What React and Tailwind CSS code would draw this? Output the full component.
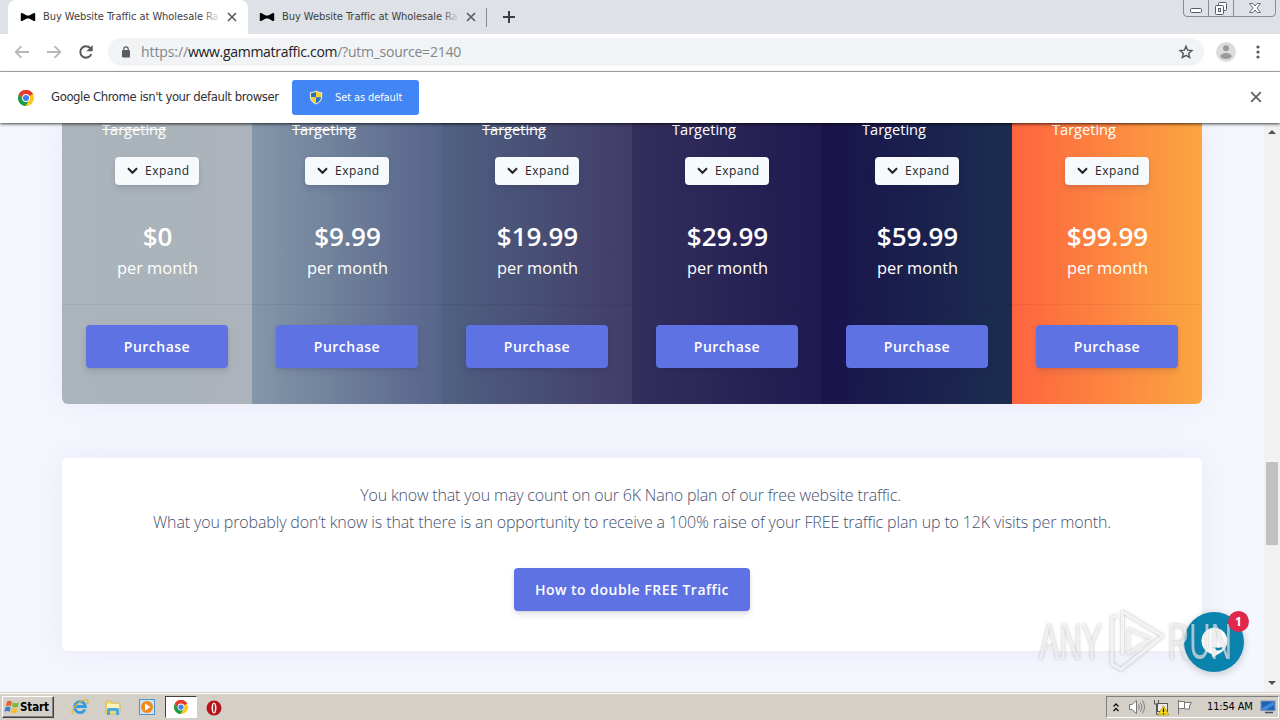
import React from "react";

const plans = [
  { price: "$0", off: true, bg: "bg-[linear-gradient(90deg,#aab4ba,#acb3bb)]" },
  { price: "$9.99", off: true, bg: "bg-[linear-gradient(90deg,#8497a9,#56648a)]" },
  { price: "$19.99", off: true, bg: "bg-[linear-gradient(90deg,#4f6181,#413c68)]" },
  { price: "$29.99", off: false, bg: "bg-[linear-gradient(90deg,#332f5b,#1f1a50)]" },
  { price: "$59.99", off: false, bg: "bg-[linear-gradient(90deg,#1a134c,#1b2d4f)]" },
  { price: "$99.99", off: false, bg: "bg-[linear-gradient(90deg,#fe643f,#fba640)]" },
];

const Bow = () => (
  <svg width="16" height="10" viewBox="0 0 16 10" className="shrink-0">
    <path d="M0.800 1.800Q0.800.6 2.200 1.100L6.800 3.600h2.400L13.800 1.100q1.400-.5 1.400.7v6.400q0 1.200-1.400.7L9.200 6.400H6.800L2.200 8.900Q.8 9.400.8 8.200Z" fill="#050505" />
  </svg>
);

const Cross = ({ size = 10, color = "#5a5e63", w = 1.700 }) => (
  <svg width={size} height={size} viewBox="0 0 10 10" className="shrink-0">
    <path d="M1 1l8 8M9 1L1 9" stroke={color} strokeWidth={w} fill="none" />
  </svg>
);

const Chrome = ({ size }) => (
  <svg width={size} height={size} viewBox="0 0 16 16" className="shrink-0">
    <circle cx="8" cy="8" r="8" fill="#fbc916" />
    <path d="M8 8L1.070 4A8 8 0 0 1 14.930 4Z" fill="#e33b2e" />
    <path d="M8 4.300H14.950A8 8 0 0 0 1.070 4L4.700 9.800Z" fill="#e33b2e" />
    <path d="M1.070 4A8 8 0 0 0 7.500 16L11 10.200 8 8 4.800 9.900Z" fill="#1a9c52" />
    <circle cx="8" cy="8" r="3.900" fill="#fff" />
    <circle cx="8" cy="8" r="3" fill="#4380ee" />
  </svg>
);

function Tab({ active }) {
  return (
    <div className={active ? "flex h-[34px] w-[240px] items-center rounded-t-lg bg-white pl-[12px]" : "flex h-[34px] w-[239px] items-center pl-[11px]"}>
      <Bow />
      <div className="relative ml-[7px] w-[178px] overflow-hidden whitespace-nowrap font-['DejaVu_Sans_Condensed','DejaVu_Sans',sans-serif] text-[11px] tracking-[-0.05px] text-[#3c4043]">
        Buy Website Traffic at Wholesale Ra
        <div className={active ? "absolute inset-y-0 right-0 w-5 bg-gradient-to-r from-white/0 to-white" : "absolute inset-y-0 right-0 w-5 bg-gradient-to-r from-[#dee1e6]/0 to-[#dee1e6]"} />
      </div>
      <div className="ml-[6px] flex"><Cross /></div>
    </div>
  );
}

function TabStrip() {
  return (
    <div className="flex h-[34px] shrink-0 bg-[#dee1e6] pl-2">
      <Tab active />
      <Tab />
      <div className="-ml-px mt-[8px] h-[19px] w-px bg-[#868b91]" />
      <svg width="14" height="14" viewBox="0 0 14 14" className="mt-[10px] ml-[15px]"><path d="M7 1v12M1 7h12" stroke="#3b3f44" strokeWidth="2" /></svg>
      <svg width="94" height="18" viewBox="0 0 94 18" className="ml-auto mr-[3px]" fill="none" stroke="#898d93">
        <path d="M.5 0v13q0 3.500 3.500 3.500h85q3.500 0 3.500-3.500V0M25.500 0v16M50.500 0v16" />
        <rect x="7.500" y="8.500" width="11" height="4" rx="1" fill="#fff" stroke="#555b66" />
        <rect x="35.500" y="2.500" width="8" height="8" rx="1" fill="#fff" stroke="#555b66" />
        <rect x="32.500" y="5.500" width="8" height="9" rx="1" fill="#fff" stroke="#555b66" />
        <rect x="35.500" y="8.500" width="2" height="3" stroke="#555b66" />
        <path d="M66.500 3.500h3.500l2 2.500 2-2.500h3.500l-3.500 4.500 3.500 4.500h-3.500l-2-2.500-2 2.500h-3.500l3.500-4.500Z" fill="#fff" stroke="#6b7079" />
      </svg>
    </div>
  );
}

function Toolbar() {
  return (
    <div className="flex h-[38px] shrink-0 items-center border-b border-[#b0b2b4] bg-white pb-px pl-[14px]">
      <svg width="16" height="14" viewBox="0 0 16 14" fill="none" stroke="#b5b7ba" strokeWidth="1.800"><path d="M15 7H2M7.500 1.200L1.700 7l5.800 5.800" /></svg>
      <svg width="16" height="14" viewBox="0 0 16 14" fill="none" stroke="#b5b7ba" strokeWidth="1.800" className="ml-4"><path d="M1 7h13M8.500 1.200L14.300 7l-5.800 5.800" /></svg>
      <svg width="16" height="16" viewBox="0 0 16 16" className="ml-[16px]"><path d="M13.300 10A5.700 5.700 0 1 1 12.300 4.200" fill="none" stroke="#54585d" strokeWidth="2" /><path d="M14.700 1v6.300H8.400Z" fill="#54585d" /></svg>
      <div className="ml-[14px] flex h-[28px] w-[1096px] items-center rounded-full bg-[#f1f3f4] pl-[13px]">
        <svg width="10" height="12" viewBox="0 0 10 12"><rect x="1" y="4" width="8" height="7.500" rx="1" fill="#5a5e63" /><path d="M2.800 5V3a2.200 2.200 0 0 1 4.400 0v2" fill="none" stroke="#5a5e63" strokeWidth="1.200" /></svg>
        <div className="ml-[10px] whitespace-nowrap font-['Open_Sans','Noto_Sans',sans-serif] text-[14px] leading-[20px] tracking-[-0.24px] text-[#80868b]"><span className="tracking-[-0.1px]">https://</span><span className="tracking-[-0.3px] text-[#202124]">www.gammatraffic.com</span>/?utm_source=2140</div>
        <svg width="16" height="16" viewBox="0 0 16 16" className="ml-auto mr-[10px]"><path d="M8 2.200l1.600 4 4.300.4-3.300 2.800 1.100 4.200L8 11.300l-3.700 2.300 1.100-4.200-3.300-2.800 4.300-.4Z" fill="none" stroke="#54585d" strokeWidth="1.400" /></svg>
      </div>
      <svg width="20" height="20" viewBox="0 0 20 20" className="ml-[12px]"><circle cx="10" cy="10" r="10" fill="#dcdcdc" /><circle cx="10" cy="6.300" r="3" fill="#9a9a9a" /><ellipse cx="10" cy="14" rx="5.600" ry="3" fill="#9a9a9a" /></svg>
      <svg width="4" height="14" viewBox="0 0 4 14" className="ml-[20px]" fill="#54585d"><circle cx="2" cy="2" r="1.600" /><circle cx="2" cy="7" r="1.600" /><circle cx="2" cy="12" r="1.600" /></svg>
    </div>
  );
}

function InfoBar() {
  return (
    <div className="z-10 flex h-[51px] shrink-0 items-center bg-white pl-[18px] font-['DejaVu_Sans_Condensed','DejaVu_Sans',sans-serif] shadow-[0_1px_3px_rgba(0,0,0,0.75)]">
      <Chrome size={16} />
      <div className="ml-[17px] w-[241px] whitespace-nowrap pb-[2px] text-[13px] tracking-[-0.42px] text-[#303236]">Google Chrome isn't your default browser</div>
      <div className="flex h-[35px] w-[127px] items-center rounded-[3px] bg-[#4285f4] pl-[17px]">
        <svg width="14" height="15" viewBox="0 0 14 15"><path d="M7 .5Q9.500 2.200 13.200 2.200V7q0 5-6.200 7.500Q.8 12 .8 7V2.200Q4.500 2.200 7 .5Z" fill="#e9e3bb" /><path d="M7 1.800V7.300H2V3.300Q5 3.200 7 1.800Z" fill="#2a6fc3" /><path d="M7 1.800Q9 3.200 12 3.300v4H7Z" fill="#f5cf2f" /><path d="M2 7.300h5v6Q2.300 11.300 2 7.300Z" fill="#f5cf2f" /><path d="M7 7.300h5Q11.700 11.300 7 13.300Z" fill="#2a6fc3" /></svg>
        <span className="ml-[12px] whitespace-nowrap pt-px text-[11px] tracking-[-0.1px] text-white">Set as default</span>
      </div>
      <div className="ml-auto mr-[18px] flex pb-px"><Cross size={12} color="#5f6368" w={1.500} /></div>
    </div>
  );
}

function Plan({ plan }) {
  return (
    <div className={`flex w-[190px] flex-col text-white ${plan.bg}`}>
      <div className={plan.off ? "-mt-[4px] h-[20px] pl-[40px] text-[14.6px] leading-[20px] line-through" : "-mt-[4px] h-[20px] pl-[40px] text-[14.6px] leading-[20px]"}>Targeting</div>
      <div className="mx-auto mt-[18px] flex h-[28px] w-[84px] items-center rounded bg-[#f7fafc] pl-[12px] text-[12px] font-medium tracking-[0.5px] text-[#212529] shadow-[0_4px_6px_rgba(50,50,93,0.11),0_1px_3px_rgba(0,0,0,0.08)]">
        <svg width="11" height="8" viewBox="0 0 11 8"><path d="M1 1.200l4.500 4.600L10 1.200" fill="none" stroke="#212529" strokeWidth="2" /></svg>
        <span className="ml-[7px]">Expand</span>
      </div>
      <div className="mt-[32px] h-[39px] pl-px text-center text-[26px] font-semibold leading-[39px]">{plan.price}</div>
      <div className="h-[24px] pl-px text-center text-[16.4px] leading-[24px]">per month</div>
      <div className="mt-[24px] flex h-[100px] justify-center border-t border-black/5 pt-[20px]">
        <div className="flex h-[43px] w-[142px] items-center justify-center rounded bg-[#5e72e4] text-[14px] font-semibold tracking-[0.5px] shadow-[0_4px_6px_rgba(50,50,93,0.11),0_1px_3px_rgba(0,0,0,0.08)]">Purchase</div>
      </div>
    </div>
  );
}

function Watermark() {
  return (
    <svg width="200" height="76" viewBox="1035 602 200 76" className="absolute top-[479px] left-[1035px]">
      <g fill="rgba(255,255,255,0.6)" style={{ filter: "drop-shadow(0 0 1.800px rgba(70,70,80,.55))" }}>
        <text x="1039" y="659" textLength="63" lengthAdjust="spacingAndGlyphs" fontFamily="Liberation Sans, sans-serif" fontSize="50">ANY</text>
        <text x="1168" y="659" textLength="64" lengthAdjust="spacingAndGlyphs" fontFamily="Liberation Sans, sans-serif" fontSize="50">RUN</text>
      </g>
      <g fill="none" strokeLinejoin="round" style={{ filter: "drop-shadow(0 0 1.800px rgba(70,70,80,.5))" }}>
        <path d="M1122.500 654V611.500L1162.500 636L1121 669.500L1112 664V618L1117 615.500" stroke="#fff" strokeOpacity="0.750" strokeWidth="3" />
        <path d="M1128.500 629L1151 639L1128.500 653.500Z" stroke="#fff" strokeOpacity="0.600" strokeWidth="2.500" />
      </g>
    </svg>
  );
}

function Page() {
  return (
    <div className="relative flex h-[569px] shrink-0 bg-[#f5f7ff] font-['Open_Sans','Noto_Sans',sans-serif]">
      <div className="flex w-[1264px] flex-col pl-[62px]">
        <div className="flex h-[281px] w-[1140px] overflow-hidden rounded-b-md shadow-[0_0_32px_rgba(136,120,150,0.12)]">
          {plans.map((p) => <Plan key={p.price} plan={p} />)}
        </div>
        <div className="mt-[54px] flex h-[193px] w-[1140px] flex-col items-center rounded-md bg-white pt-[24px] text-center text-[16px] font-light leading-[27px] text-[#46506e] shadow-[0_0_32px_rgba(136,120,150,0.12)]">
          <p className="mr-[3px] whitespace-nowrap tracking-[-0.17px]">You know that you may count on our 6K Nano plan of our free website traffic.</p>
          <p className="whitespace-nowrap tracking-[-0.135px]">What you probably don’t know is that there is an opportunity to receive a 100% raise of your FREE traffic plan up to 12K visits per month.</p>
          <div className="mt-[32px] flex h-[43px] w-[236px] items-center justify-center rounded bg-[#5e72e4] text-[14px] font-semibold tracking-[0.5px] text-white shadow-[0_4px_6px_rgba(50,50,93,0.11),0_1px_3px_rgba(0,0,0,0.08)]">How to double FREE Traffic</div>
        </div>
      </div>
      <div className="flex w-[16px] flex-col items-center bg-[#f1f1f1]">
        <svg width="8" height="4" viewBox="0 0 8 4" className="mt-[7px]"><path d="M0 4l4-4 4 4Z" fill="#505050" /></svg>
        <div className="mt-[328px] h-[83px] w-[12px] bg-[#c1c1c1]" />
        <svg width="8" height="4" viewBox="0 0 8 4" className="mt-auto mb-[7px]"><path d="M0 0h8L4 4Z" fill="#505050" /></svg>
      </div>
      <div className="absolute top-[489px] left-[1184px] flex h-[60px] w-[60px] items-center justify-center rounded-full bg-[#0a84ae] shadow-[0_2px_8px_rgba(0,0,0,0.2)]">
        <svg width="30" height="32" viewBox="0 0 30 32"><path d="M15 1.500a13.500 13.500 0 0 1 7.500 24.700L13.500 31.500l-1-3.500A13.500 13.500 0 0 1 15 1.500Z" fill="#fff" /><path d="M13.500 21q6 1.500 11 0-2.500 4-6.500 3.500Z" fill="#0a84ae" /></svg>
      </div>
      <Watermark />
      <div className="absolute top-[488px] left-[1228px] flex h-[21px] w-[21px] items-center justify-center rounded-full bg-[#e0294a] text-[12px] font-bold text-white">1</div>
    </div>
  );
}

function Taskbar() {
  return (
    <div className="flex h-[28px] shrink-0 items-start border-t border-[#d4d0c8] bg-[#d4d0c8] font-['DejaVu_Sans_Condensed','DejaVu_Sans',sans-serif] shadow-[inset_0_1px_0_#ffffff]">
      <div className="mt-[3px] ml-[2px] flex h-[22px] w-[52px] items-center border border-r-[#404040] border-b-[#404040] border-t-white border-l-white pl-[1px] shadow-[inset_-1px_-1px_0_#808080]">
        <svg width="16" height="16" viewBox="0 0 16 16"><path d="M3 2.500Q5.500 1 8 3L7 7.300Q4.500 5.800 1.800 7Z" fill="#e8622c" /><path d="M9 3.400Q12 5 15 3.500L13.800 8Q11 9 8 7.700Z" fill="#7db93c" /><path d="M1.500 8.200Q4 6.900 6.700 8.500L5.600 12.800Q3.500 11.500.4 12.500Z" fill="#3a7fd0" /><path d="M7.800 8.900q2.700 1.600 5.700.4L12.300 13.700Q9.500 15 6.700 13.300Z" fill="#f4bd2f" /></svg>
        <span className="pt-px text-[11.5px] font-bold tracking-[-0.1px] text-black">Start</span>
      </div>
      <svg width="18" height="18" viewBox="0 0 18 18" className="mt-[5px] ml-[17px]"><path d="M14 11.500A5.500 5.500 0 1 1 14.500 8.500H5" fill="none" stroke="#2f9be0" strokeWidth="2.800" /><path d="M2 16Q-1 14 5 7.500T16.500 2q1.500 1-.5 4" fill="none" stroke="#e0b43a" strokeWidth="1.300" /></svg>
      <svg width="18" height="18" viewBox="0 0 18 18" className="mt-[5px] ml-[15px]"><path d="M2 3h5l1 2h8v11H2Z" fill="#f2da7c" stroke="#cfae4a" strokeWidth=".6" /><path d="M3 6h12v4H3Z" fill="#fff3bd" /><path d="M3 17v-5q0-2 2-2h8q2 0 2 2v5h-3v-4H6v4Z" fill="#4aa9dd" /></svg>
      <svg width="18" height="18" viewBox="0 0 18 18" className="mt-[5px] ml-[16px]"><rect x="1.500" y="1.500" width="15" height="15" fill="#cfe3f5" stroke="#4f94ce" /><circle cx="9" cy="9" r="6" fill="#ef8b1c" /><path d="M7 5.500l5.500 3.500L7 12.500Z" fill="#fff" /></svg>
      <div className="mt-[3px] ml-[9px] flex h-[22px] w-[32px] items-center justify-center border border-t-[#404040] border-l-[#404040] border-r-white border-b-white bg-white"><Chrome size={14} /></div>
      <svg width="16" height="16" viewBox="0 0 16 16" className="mt-[7px] ml-[9px]"><circle cx="8" cy="8" r="7.500" fill="#b8131a" /><ellipse cx="8" cy="8" rx="2.500" ry="5.500" fill="#f8f2f2" /><ellipse cx="8" cy="8" rx="0.900" ry="4.200" fill="#a01218" /></svg>
      <div className="mt-[3px] ml-auto mr-[1px] flex h-[22px] w-[173px] items-center border border-t-[#808080] border-l-[#808080] border-r-white border-b-white pl-[6px]">
        <svg width="6" height="9" viewBox="0 0 6 9" fill="none" stroke="#111" strokeWidth="1.300"><path d="M.5 3.500L3 1l2.500 2.500M.5 8L3 5.500 5.500 8" /></svg>
        <svg width="18" height="16" viewBox="0 0 18 16" className="ml-[9px]" stroke="#808080" fill="none"><path d="M1.500 5.500H4L8.500 1.500v13L4 10.500H1.500Z" fill="#fff" stroke="#777" /><path d="M10.500 5.500q1.500 2.500 0 5M12.500 3.500q3 4.500 0 9M14.500 1.500q4 6.500 0 13" /></svg>
        <svg width="18" height="17" viewBox="0 0 18 17" className="ml-[6px]"><rect x="5.500" y="4.500" width="10" height="8" fill="#eee" stroke="#555" /><path d="M2.500 1v4h4V1M4.500 5v10.500h7" fill="none" stroke="#555" /><path d="M11.500 6.500l5.500 9.500H6Z" fill="#f7d512" stroke="#a48908" strokeWidth=".6" /><path d="M11.500 9.500v3.500M11.500 14v1.200" stroke="#111" strokeWidth="1.200" /></svg>
        <svg width="17" height="16" viewBox="0 0 17 16" className="ml-[6px]" stroke="#777" fill="#fff"><path d="M2.500 1v14.500M2.500 2.500h6v7h-6M8.500 3.500l7 0-2 3.500 0 3H8.500" /></svg>
        <span className="ml-[14px] w-[48px] whitespace-nowrap pt-px text-[11px] tracking-[-0.15px] text-black">11:54 AM</span>
        <svg width="16" height="14" viewBox="0 0 16 14" className="ml-[5px]"><rect x="1" y="1" width="14" height="9.500" fill="#1f61b5" stroke="#7494ba" /><path d="M1.500 8L14 1.500V5L6 10H1.500Z" fill="#3d8ada" /><path d="M5 12.500h8" stroke="#3c5070" strokeWidth="1.500" /></svg>
      </div>
    </div>
  );
}

export default function App() {
  return (
    <div className="flex h-[720px] w-[1280px] flex-col overflow-hidden bg-white">
      <TabStrip />
      <Toolbar />
      <InfoBar />
      <Page />
      <Taskbar />
    </div>
  );
}
